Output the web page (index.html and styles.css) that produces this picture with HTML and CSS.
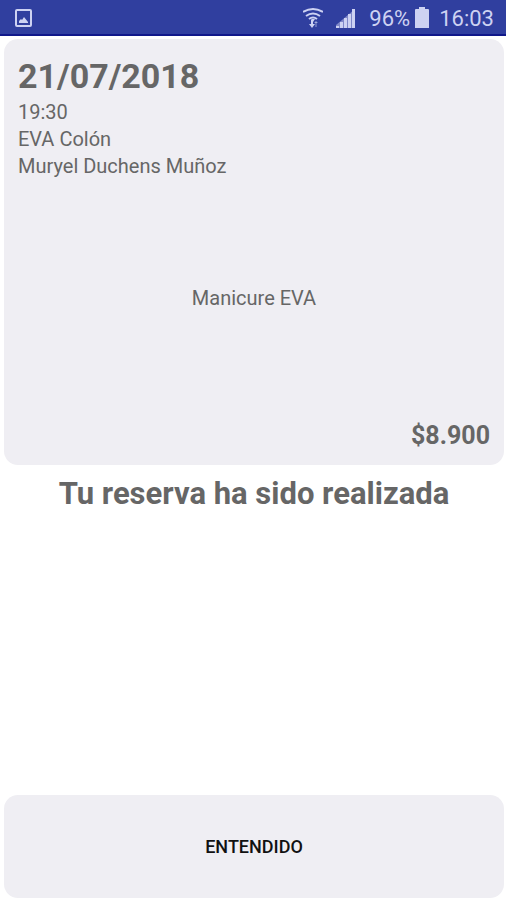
FILE: index.html
```
<!DOCTYPE html>
<html lang="es">
<head>
    <meta charset="UTF-8">
    <meta name="viewport" content="width=device-width, initial-scale=1.0">
    <title>Reserva</title>
    <link rel="stylesheet" href="styles.css">
</head>
<body>
    <header class="status-bar">
        <svg class="icon-picture" width="20" height="20" viewBox="0 0 20 20">
            <rect x="2" y="2" width="15" height="16" rx="1" fill="none" stroke="currentColor" stroke-width="2"/>
            <path d="M5 15v-2l2-2 1 1 2-3 4 5v1z" fill="currentColor"/>
        </svg>
        <div class="status-info">
            <svg class="icon-wifi" width="20" height="22" viewBox="0 0 20 22">
                <g fill="none" stroke="currentColor" stroke-width="2">
                    <path d="M0 5q10-6 20 0"/>
                    <path d="M3 9q7-5 14 0"/>
                    <path d="M6 12q4-3 8 0"/>
                    <path d="M9 13v6"/>
                    <path d="M13 20v-5" stroke-width="1" opacity=".6"/>
                </g>
                <path d="M6 17h6l-3 4z" fill="currentColor"/>
                <path d="M8 12h4l-2 3z" fill="currentColor"/>
                <path d="M11 16h4l-2-2z" fill="currentColor" opacity=".6"/>
            </svg>
            <svg class="icon-signal" width="20" height="20" viewBox="0 0 20 20">
                <path d="M0 20v-3L19 1v19z" fill="currentColor" opacity=".5"/>
                <path d="M0 18h3v2H0zM4 14h3v6H4zM8 10h3v10H8zM12 6h3v14h-3zM16 1h3v19h-3z" fill="currentColor"/>
            </svg>
            <span class="battery-level">96%</span>
            <svg class="icon-battery" width="14" height="22" viewBox="0 0 14 22">
                <path d="M4 0h6v2h3q1 0 1 1v18H0V3q0-1 1-1h3z" fill="currentColor"/>
            </svg>
            <span>16:03</span>
        </div>
    </header>

    <main class="content">
        <section class="card">
            <h1 class="date">21/07/2018</h1>
            <p>19:30</p>
            <p>EVA Colón</p>
            <p>Muryel Duchens Muñoz</p>
            <p class="service">Manicure EVA</p>
            <p class="price">$8.900</p>
        </section>

        <h2 class="message">Tu reserva ha sido realizada</h2>

        <button type="button" class="accept-button">ENTENDIDO</button>
    </main>
</body>
</html>
```
FILE: styles.css
```
* {
    box-sizing: border-box;
}

body {
    font-family: Roboto, "Liberation Sans", sans-serif;
    font-size: 20px;
    line-height: 27px;
    color: #666;
    background-color: #fff;
    display: flex;
    flex-direction: column;
    min-height: 100vh;
    margin: 0;
}

h1, h2, p {
    margin: 0;
}

.status-bar {
    display: flex;
    justify-content: space-between;
    align-items: center;
    height: 36px;
    padding: 2px 12px 0 14px;
    color: #cdd2f2;
    background-color: #303f9f;
    border-bottom: 2px solid #10188a;
    font-size: 22px;
}

.status-info {
    display: flex;
    align-items: center;
}

.icon-signal {
    margin: 0 13px;
}

.icon-battery {
    margin: 0 10px 0 5px;
}

.content {
    flex: 1;
    display: flex;
    flex-direction: column;
    padding: 3px 2px 2px 4px;
}

.card {
    flex: 0 1 426px;
    display: flex;
    flex-direction: column;
    padding: 16px 14px;
    background-color: #efeef3;
    border-radius: 14px;
}

.date {
    padding-bottom: 2px;
    font-size: 34px;
    line-height: 42px;
}

.service {
    flex: 1;
    display: flex;
    align-items: center;
    justify-content: center;
    padding-bottom: 6px;
}

.price {
    text-align: right;
    font-size: 25px;
    font-weight: bold;
}

.message {
    padding-top: 10px;
    text-align: center;
    font-size: 31px;
    line-height: 38px;
}

.accept-button {
    margin-top: auto;
    padding: 38px 16px;
    font-family: inherit;
    font-size: 18px;
    font-weight: 500;
    line-height: 27px;
    color: #111;
    background-color: #efeef3;
    border: none;
    border-radius: 14px;
    cursor: pointer;
}
```
